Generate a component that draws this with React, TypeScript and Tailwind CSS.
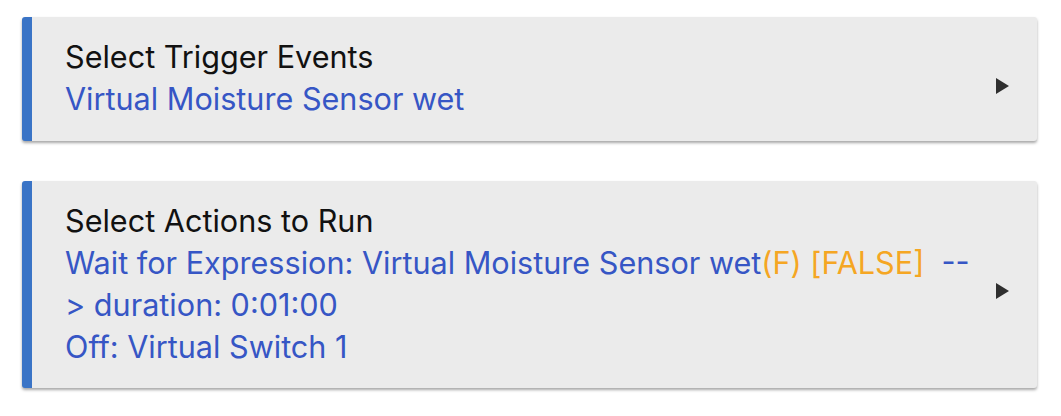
import React from "react";

const Arrow = () => (
  <svg width="15" height="18" viewBox="0 0 15 18" className="shrink-0">
    <path d="M1 1 L14 9 L1 17 Z" fill="#2f2f2f" />
  </svg>
);

export default function App() {
  return (
    <div
      className="w-[1061px] h-[416px] bg-white pt-[17px] pl-[22px]"
      style={{ fontFamily: "Inter, 'Noto Sans', sans-serif" }}
    >
      <div className="w-[1015px] h-[124px] flex items-center bg-[#ebebeb] rounded-[3px] border-l-[10px] border-[#3a74c6] shadow-[0_2px_3px_rgba(0,0,0,0.35)]">
        <div className="flex-1 pl-[33px] text-[30.6px] leading-[42px] pb-[2px]">
          <div className="text-[#111]">Select Trigger Events</div>
          <div className="text-[#3656c5]">Virtual Moisture Sensor wet</div>
        </div>
        <div className="pr-[27px] pt-[13px]">
          <Arrow />
        </div>
      </div>
      <div className="mt-[40px] w-[1015px] h-[207px] flex items-center bg-[#ebebeb] rounded-[3px] border-l-[10px] border-[#3a74c6] shadow-[0_2px_3px_rgba(0,0,0,0.35)]">
        <div className="flex-1 pl-[33px] text-[30.6px] leading-[42px] pb-[2px]">
          <div className="text-[#111]">Select Actions to Run</div>
          <div className="text-[#3656c5]">
            Wait for Expression: Virtual Moisture Sensor wet
            <span className="text-[#f5a623]">(F) [FALSE]</span>&nbsp;&nbsp;--
            <br />
            &gt; duration: 0:01:00
          </div>
          <div className="text-[#3656c5]">Off: Virtual Switch 1</div>
        </div>
        <div className="pr-[27px] pt-[13px]">
          <Arrow />
        </div>
      </div>
    </div>
  );
}
